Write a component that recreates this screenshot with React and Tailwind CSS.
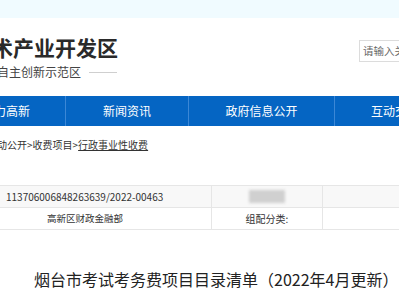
import React from "react";

const cjk = { fontFamily: '"Noto Sans CJK SC", "Noto Sans", sans-serif' };

export default function App() {
  return (
    <div className="w-[399px] h-[300px] overflow-hidden bg-white text-[#333]" style={cjk}>
      {/* top strip */}
      <div className="h-[18px] bg-[#f0fbff]" />

      {/* header */}
      <div className="h-[78px] flex items-start justify-between">
        <div className="pt-[17px]">
          <div className="-ml-[8px] text-[21px] leading-[24px] font-bold text-[#2a2a2a] whitespace-nowrap">
            术产业开发区
          </div>
          <div className="mt-[6px] -ml-[3px] flex items-center gap-[8px]">
            <span className="text-[12px] leading-[14px] text-[#444] whitespace-nowrap">自主创新示范区</span>
            <span className="w-[28px] h-px bg-[#cfcfcf]" />
          </div>
        </div>
        <div className="mt-[22px] w-[40px] h-[22px] border border-[#dcdcdc] border-r-0 flex items-center pl-[3px] overflow-hidden">
          <span className="text-[10.5px] text-[#666] whitespace-nowrap">请输入关键词</span>
        </div>
      </div>

      {/* nav */}
      <div className="h-[30px] bg-[#0565c3] flex text-white text-[12px] whitespace-nowrap">
        <div className="-ml-[53px] w-[119px] shrink-0 flex items-center justify-center border-r border-[#3b87d6]">
          魅力高新
        </div>
        <div className="w-[123px] shrink-0 flex items-center justify-center border-r border-[#3b87d6]">
          新闻资讯
        </div>
        <div className="w-[146px] shrink-0 flex items-center justify-center border-r border-[#3b87d6]">
          政府信息公开
        </div>
        <div className="w-[120px] shrink-0 flex items-center justify-center">互动交流</div>
      </div>

      {/* breadcrumb */}
      <div className="h-[59px] pt-[13px]">
        <div className="-ml-[13px] text-[10px] leading-[12px] text-[#333] whitespace-nowrap">
          互动公开&gt;收费项目&gt;<span className="underline">行政事业性收费</span>
        </div>
      </div>

      {/* info table */}
      <div className="text-[10px] text-[#333] border-t border-[#e6e6e6]">
        <div className="h-[22px] flex bg-[#f8f8f8] border-b border-[#e6e6e6]">
          <div className="w-[212px] shrink-0 flex items-center pl-[6px] border-r border-[#e6e6e6] whitespace-nowrap">
            113706006848263639/2022-00463
          </div>
          <div className="w-[111px] shrink-0 flex items-center justify-center border-r border-[#e6e6e6]">
            <div className="w-[36px] h-[13px] bg-[#d0d0d0] blur-[1.5px]" />
          </div>
          <div className="flex-1" />
        </div>
        <div className="h-[22px] flex border-b border-[#e6e6e6]">
          <div className="w-[212px] shrink-0 flex items-center pl-[47px] border-r border-[#e6e6e6] text-[9.5px] whitespace-nowrap">
            高新区财政金融部
          </div>
          <div className="w-[111px] shrink-0 flex items-center justify-center border-r border-[#e6e6e6] whitespace-nowrap">
            组配分类:
          </div>
          <div className="flex-1" />
        </div>
      </div>

      {/* article title */}
      <div className="pt-[39px] pl-[34px] text-[16px] leading-[20px] text-[#222] whitespace-nowrap">
        烟台市考试考务费项目目录清单（2022年4月更新）
      </div>
    </div>
  );
}
